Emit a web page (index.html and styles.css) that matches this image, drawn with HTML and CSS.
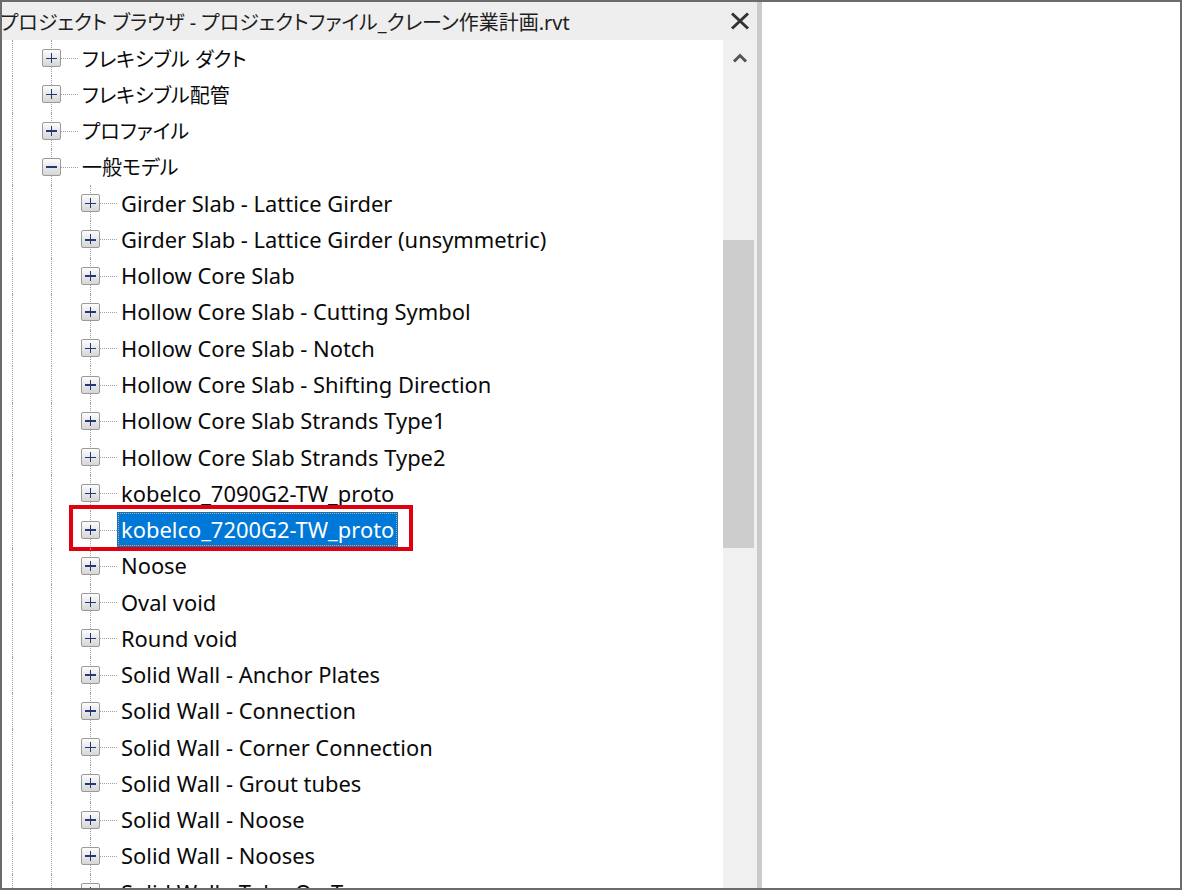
FILE: index.html
```html
<!DOCTYPE html>
<html lang="ja">
<head>
<meta charset="utf-8">
<title>プロジェクト ブラウザ</title>
<link rel="stylesheet" href="styles.css">
</head>
<body>
<div class="frame">
  <div class="browser">
    <div class="titlebar">
      <span class="title">プロジェクト ブラウザ - プロジェクトファイル_クレーン作業計画.rvt</span>
      <span class="close"><svg width="20" height="18" viewBox="0 0 20 18"><path d="M2 1.5 L18 16.5 M18 1.5 L2 16.5" stroke="#333" stroke-width="3" fill="none"/></svg></span>
    </div>
    <div class="content">
      <div class="tree">
        <div class="row"><span class="guide"></span><span class="node"><span class="box plus"></span></span><span class="label ja">フレキシブル ダクト</span></div>
        <div class="row"><span class="guide"></span><span class="node"><span class="box plus"></span></span><span class="label ja">フレキシブル配管</span></div>
        <div class="row"><span class="guide"></span><span class="node"><span class="box plus"></span></span><span class="label ja">プロファイル</span></div>
        <div class="row"><span class="guide"></span><span class="node"><span class="box minus"></span></span><span class="label ja">一般モデル</span></div>
        <div class="row"><span class="guide"></span><span class="guide"></span><span class="node"><span class="box plus"></span></span><span class="label">Girder Slab - Lattice Girder</span></div>
        <div class="row"><span class="guide"></span><span class="guide"></span><span class="node"><span class="box plus"></span></span><span class="label">Girder Slab - Lattice Girder (unsymmetric)</span></div>
        <div class="row"><span class="guide"></span><span class="guide"></span><span class="node"><span class="box plus"></span></span><span class="label">Hollow Core Slab</span></div>
        <div class="row"><span class="guide"></span><span class="guide"></span><span class="node"><span class="box plus"></span></span><span class="label">Hollow Core Slab - Cutting Symbol</span></div>
        <div class="row"><span class="guide"></span><span class="guide"></span><span class="node"><span class="box plus"></span></span><span class="label">Hollow Core Slab - Notch</span></div>
        <div class="row"><span class="guide"></span><span class="guide"></span><span class="node"><span class="box plus"></span></span><span class="label">Hollow Core Slab - Shifting Direction</span></div>
        <div class="row"><span class="guide"></span><span class="guide"></span><span class="node"><span class="box plus"></span></span><span class="label">Hollow Core Slab Strands Type1</span></div>
        <div class="row"><span class="guide"></span><span class="guide"></span><span class="node"><span class="box plus"></span></span><span class="label">Hollow Core Slab Strands Type2</span></div>
        <div class="row"><span class="guide"></span><span class="guide"></span><span class="node"><span class="box plus"></span></span><span class="label">kobelco_7090G2-TW_proto</span></div>
        <div class="row"><span class="guide"></span><span class="guide"></span><span class="node"><span class="box plus"></span></span><span class="label selected">kobelco_7200G2-TW_proto</span><span class="mark"></span></div>
        <div class="row"><span class="guide"></span><span class="guide"></span><span class="node"><span class="box plus"></span></span><span class="label">Noose</span></div>
        <div class="row"><span class="guide"></span><span class="guide"></span><span class="node"><span class="box plus"></span></span><span class="label">Oval void</span></div>
        <div class="row"><span class="guide"></span><span class="guide"></span><span class="node"><span class="box plus"></span></span><span class="label">Round void</span></div>
        <div class="row"><span class="guide"></span><span class="guide"></span><span class="node"><span class="box plus"></span></span><span class="label">Solid Wall - Anchor Plates</span></div>
        <div class="row"><span class="guide"></span><span class="guide"></span><span class="node"><span class="box plus"></span></span><span class="label">Solid Wall - Connection</span></div>
        <div class="row"><span class="guide"></span><span class="guide"></span><span class="node"><span class="box plus"></span></span><span class="label">Solid Wall - Corner Connection</span></div>
        <div class="row"><span class="guide"></span><span class="guide"></span><span class="node"><span class="box plus"></span></span><span class="label">Solid Wall - Grout tubes</span></div>
        <div class="row"><span class="guide"></span><span class="guide"></span><span class="node"><span class="box plus"></span></span><span class="label">Solid Wall - Noose</span></div>
        <div class="row"><span class="guide"></span><span class="guide"></span><span class="node"><span class="box plus"></span></span><span class="label">Solid Wall - Nooses</span></div>
        <div class="row"><span class="guide"></span><span class="guide"></span><span class="node"><span class="box plus"></span></span><span class="label">Solid Wall - Tube On Top</span></div>
      </div>
      <div class="scroll">
        <span class="arrow"><svg width="16" height="10" viewBox="0 0 16 10"><path d="M2 8.5 L8 2.5 L14 8.5" stroke="#555" stroke-width="3" fill="none"/></svg></span>
        <span class="thumb"></span>
      </div>
    </div>
  </div>
  <div class="split"></div>
  <div class="right"></div>
</div>
</body>
</html>
```

FILE: styles.css
```css
html, body {
  margin: 0;
  padding: 0;
  background: #ffffff;
}

.frame {
  box-sizing: border-box;
  width: 1182px;
  height: 890px;
  border: 2px solid #6b6b6b;
  display: flex;
  overflow: hidden;
  background: #ffffff;
}

.browser {
  width: 755px;
  flex: none;
  display: flex;
  flex-direction: column;
  min-height: 0;
}

.split {
  width: 5px;
  flex: none;
  background: #cbcbcb;
}

.right {
  flex: 1;
  background: #ffffff;
}

.titlebar {
  height: 38px;
  flex: none;
  background: #eeeeee;
  display: flex;
  align-items: center;
  justify-content: space-between;
}

.title {
  margin-left: -2px;
  font-family: "Noto Sans", "Noto Sans CJK JP", sans-serif;
  font-feature-settings: "palt";
  font-size: 20px;
  color: #1e1e1e;
  white-space: nowrap;
}

.close {
  width: 34px;
  height: 38px;
  display: flex;
  align-items: center;
  justify-content: center;
}

.content {
  flex: 1;
  display: flex;
  min-height: 0;
}

.tree {
  flex: 1;
  overflow: hidden;
  font-family: "Noto Sans", "Noto Sans CJK JP", sans-serif;
  font-feature-settings: "palt";
  font-size: 21.9px;
  color: #0a0a0a;
}

.row {
  height: 36.27px;
  display: flex;
  align-items: stretch;
  position: relative;
}

.guide {
  width: 39px;
  flex: none;
  position: relative;
}

.guide::before,
.node::before {
  content: "";
  position: absolute;
  left: 10px;
  top: 0;
  bottom: 0;
  border-left: 1px dotted #a3a3a3;
}

.node {
  width: 37px;
  flex: none;
  position: relative;
  display: flex;
  align-items: center;
}

.node::after {
  content: "";
  position: absolute;
  left: 20px;
  right: 0;
  top: 50%;
  border-top: 1px dotted #a3a3a3;
}

.box {
  position: relative;
  z-index: 1;
  margin-left: 1px;
  width: 19px;
  height: 18px;
  box-sizing: border-box;
  border: 1px solid #9a9a9a;
  border-radius: 2px;
  background: linear-gradient(#fcfcfc, #d6d6d6);
}

.box::before {
  content: "";
  position: absolute;
  left: 3px;
  right: 3px;
  top: 7.5px;
  height: 1.6px;
  background: #243878;
}

.box.plus::after {
  content: "";
  position: absolute;
  top: 3px;
  bottom: 3px;
  left: 7.7px;
  width: 1.6px;
  background: #243878;
}

.label {
  display: flex;
  align-items: center;
  padding: 0 4px;
  white-space: nowrap;
}

.label.ja {
  font-size: 20px;
}

.label.selected {
  align-self: center;
  height: 35px;
  background: #0078d7;
  color: #ffffff;
  outline: 1px dotted #f09a3c;
  outline-offset: -2px;
}

.mark {
  position: absolute;
  left: 67px;
  top: -6px;
  width: 344px;
  height: 46px;
  box-sizing: border-box;
  border: 4px solid #e00010;
}

.scroll {
  width: 34px;
  flex: none;
  background: #f0f0f0;
  display: flex;
  flex-direction: column;
  align-items: flex-start;
}

.arrow {
  width: 34px;
  height: 36px;
  display: flex;
  align-items: center;
  justify-content: center;
}

.thumb {
  margin-top: 164px;
  width: 31px;
  height: 308px;
  background: #cdcdcd;
}
```
